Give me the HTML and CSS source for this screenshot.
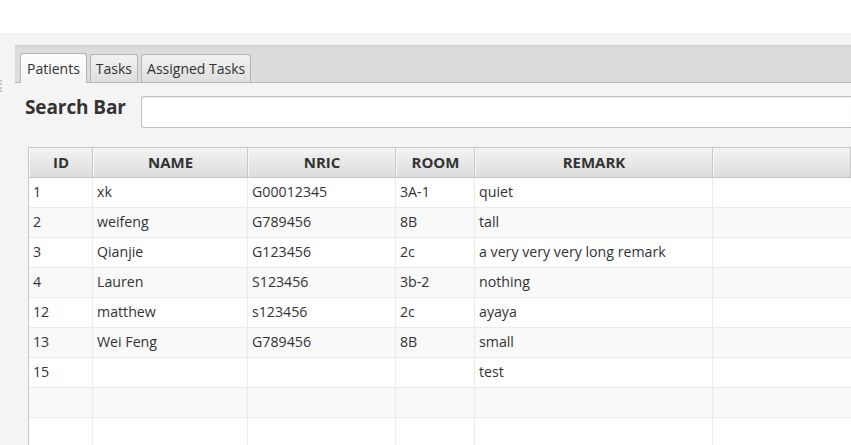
FILE: index.html
```html
<!DOCTYPE html>
<html>
<head>
<meta charset="utf-8">
<link rel="stylesheet" href="styles.css">
</head>
<body>
<div class="topbar"></div>
<div class="app">
  <div class="divider"></div>
  <div class="pane">
    <div class="tabbar">
      <div class="tab selected">Patients</div>
      <div class="tab">Tasks</div>
      <div class="tab">Assigned Tasks</div>
    </div>
    <div class="content">
      <div class="searchrow">
        <div class="label">Search Bar</div>
        <div class="field"></div>
      </div>
      <div class="table">
        <div class="row head">
          <div class="c c1">ID</div><div class="c c2">NAME</div><div class="c c3">NRIC</div><div class="c c4">ROOM</div><div class="c c5">REMARK</div><div class="c c6"></div>
        </div>
        <div class="row">
          <div class="c c1">1</div><div class="c c2">xk</div><div class="c c3">G00012345</div><div class="c c4">3A-1</div><div class="c c5">quiet</div><div class="c c6"></div>
        </div>
        <div class="row odd">
          <div class="c c1">2</div><div class="c c2">weifeng</div><div class="c c3">G789456</div><div class="c c4">8B</div><div class="c c5">tall</div><div class="c c6"></div>
        </div>
        <div class="row">
          <div class="c c1">3</div><div class="c c2">Qianjie</div><div class="c c3">G123456</div><div class="c c4">2c</div><div class="c c5">a very very very long remark</div><div class="c c6"></div>
        </div>
        <div class="row odd">
          <div class="c c1">4</div><div class="c c2">Lauren</div><div class="c c3">S123456</div><div class="c c4">3b-2</div><div class="c c5">nothing</div><div class="c c6"></div>
        </div>
        <div class="row">
          <div class="c c1">12</div><div class="c c2">matthew</div><div class="c c3">s123456</div><div class="c c4">2c</div><div class="c c5">ayaya</div><div class="c c6"></div>
        </div>
        <div class="row odd">
          <div class="c c1">13</div><div class="c c2">Wei Feng</div><div class="c c3">G789456</div><div class="c c4">8B</div><div class="c c5">small</div><div class="c c6"></div>
        </div>
        <div class="row">
          <div class="c c1">15</div><div class="c c2"></div><div class="c c3"></div><div class="c c4"></div><div class="c c5">test</div><div class="c c6"></div>
        </div>
        <div class="row odd">
          <div class="c c1"></div><div class="c c2"></div><div class="c c3"></div><div class="c c4"></div><div class="c c5"></div><div class="c c6"></div>
        </div>
        <div class="row">
          <div class="c c1"></div><div class="c c2"></div><div class="c c3"></div><div class="c c4"></div><div class="c c5"></div><div class="c c6"></div>
        </div>
      </div>
    </div>
  </div>
</div>
</body>
</html>
```
FILE: styles.css
```css
html, body {
  margin: 0;
  padding: 0;
  height: 100%;
  overflow: hidden;
}
body {
  background: #f4f4f4;
  font-family: "Open Sans", "Noto Sans", sans-serif;
  color: #333;
}
.topbar {
  height: 33px;
  background: #ffffff;
}
.app {
  display: flex;
  padding-top: 12px;
}
.divider {
  width: 15px;
  flex: none;
  position: relative;
}
.divider::after {
  content: "";
  position: absolute;
  left: 0;
  top: 35px;
  width: 2px;
  height: 12px;
  border-left: 2px dotted #c8c8c8;
}
.pane {
  flex: 1;
  min-width: 0;
}
.tabbar {
  height: 29px;
  padding: 8px 0 0 5px;
  background: linear-gradient(#cfcfcf 0px, #dcdcdc 4px, #dcdcdc);
  border-bottom: 1px solid #b5b5b5;
  display: flex;
  gap: 3px;
  align-items: flex-end;
}
.tab {
  height: 28px;
  box-sizing: border-box;
  padding: 0 5px;
  border: 1px solid #b4b4b4;
  border-bottom: none;
  border-radius: 3px 3px 0 0;
  background: linear-gradient(#f2f2f2, #dedede);
  font-size: 14px;
  line-height: 28px;
  color: #333;
}
.tab.selected {
  height: 30px;
  line-height: 30px;
  padding: 0 6px;
  background: linear-gradient(#fdfdfd, #f4f4f4);
  margin-bottom: -1px;
}
.content {
  padding: 12px 0 0 10px;
}
.searchrow {
  display: flex;
  align-items: center;
  height: 34px;
}
.label {
  width: 116px;
  flex: none;
  font-weight: 700;
  font-size: 19px;
  color: #333;
  letter-spacing: -0.1px;
  margin-bottom: 10px;
}
.field {
  flex: 1;
  height: 30px;
  background: #ffffff;
  border: 1px solid #c2c2c2;
  border-right: none;
  border-radius: 3px 0 0 3px;
  box-shadow: inset 0 1px 1px #e6e6e6;
}
.table {
  margin: 18px 0 0 3px;
  border-left: 1px solid #c8c8c8;
  border-top: 1px solid #c8c8c8;
  background: #ffffff;
}
.row {
  display: flex;
  height: 30px;
  background: #ffffff;
}
.row.odd {
  background: #f9f9f9;
}
.row.head {
  height: 29px;
  background: linear-gradient(#f3f3f3, #dddddd);
  border-bottom: 1px solid #c4c4c4;
}
.c {
  box-sizing: border-box;
  flex: none;
  border-right: 1px solid #ebebeb;
  border-bottom: 1px solid #ebebeb;
  padding-left: 4px;
  font-size: 14.2px;
  line-height: 28px;
  color: #333;
  white-space: nowrap;
}
.head .c {
  border-right: 1px solid #c8c8c8;
  border-bottom: none;
  border-left: 1px solid #f6f6f6;
  text-align: center;
  padding-left: 0;
  font-weight: 700;
  font-size: 15px;
  line-height: 29px;
}
.c1 { width: 64px; }
.c2 { width: 155px; }
.c3 { width: 148px; }
.c4 { width: 79px; }
.c5 { width: 238px; }
.c6 { flex: 1; border-right: none; }
```
